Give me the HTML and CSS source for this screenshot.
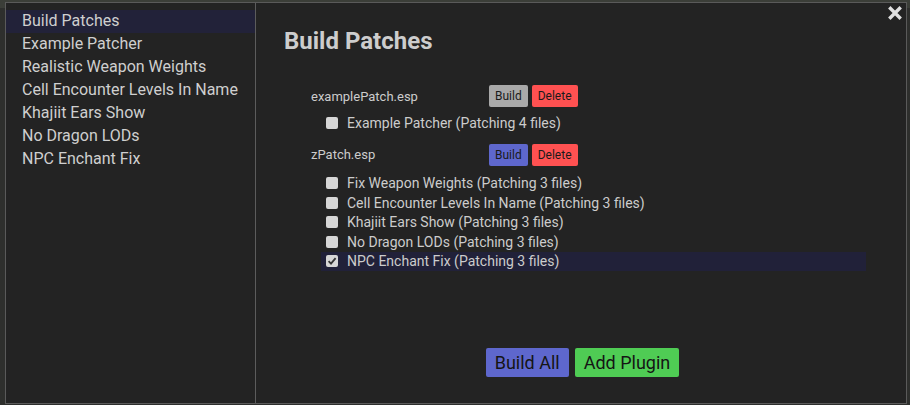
FILE: index.html
```html
<!DOCTYPE html>
<html>
<head>
<meta charset="utf-8">
<link rel="stylesheet" href="styles.css">
</head>
<body>
<div class="backdrop">
  <div class="bg-top"></div>
</div>
<div class="modal">
  <aside class="sidebar">
    <div class="nav-item active">Build Patches</div>
    <div class="nav-item">Example Patcher</div>
    <div class="nav-item">Realistic Weapon Weights</div>
    <div class="nav-item">Cell Encounter Levels In Name</div>
    <div class="nav-item">Khajiit Ears Show</div>
    <div class="nav-item">No Dragon LODs</div>
    <div class="nav-item">NPC Enchant Fix</div>
  </aside>
  <main class="content">
    <h1 class="title">Build Patches</h1>
    <div class="patches">
      <section class="patch">
        <div class="patch-head">
          <span class="patch-name">examplePatch.esp</span>
          <button class="btn btn-grey">Build</button>
          <button class="btn btn-red">Delete</button>
        </div>
        <label class="row"><span class="box"></span><span class="label">Example Patcher (Patching 4 files)</span></label>
      </section>
      <section class="patch patch-second">
        <div class="patch-head">
          <span class="patch-name">zPatch.esp</span>
          <button class="btn btn-blue">Build</button>
          <button class="btn btn-red">Delete</button>
        </div>
        <label class="row"><span class="box"></span><span class="label">Fix Weapon Weights (Patching 3 files)</span></label>
        <label class="row"><span class="box"></span><span class="label">Cell Encounter Levels In Name (Patching 3 files)</span></label>
        <label class="row"><span class="box"></span><span class="label">Khajiit Ears Show (Patching 3 files)</span></label>
        <label class="row"><span class="box"></span><span class="label">No Dragon LODs (Patching 3 files)</span></label>
        <label class="row selected"><span class="box"><svg viewBox="0 0 12 12" width="12" height="12"><path d="M2.6 6.2 L5 8.6 L9.6 3.2" fill="none" stroke="#333" stroke-width="1.8"/></svg></span><span class="label">NPC Enchant Fix (Patching 3 files)</span></label>
      </section>
    </div>
    <div class="footer">
      <button class="btn-lg btn-blue">Build All</button>
      <button class="btn-lg btn-green">Add Plugin</button>
    </div>
  </main>
  <button class="close" aria-label="Close"><svg viewBox="0 0 14 14" width="14" height="14"><path d="M2.5 2.5 L11.5 11.5 M11.5 2.5 L2.5 11.5" stroke="#e0e0e0" stroke-width="3.4" stroke-linecap="square"/></svg></button>
</div>
</body>
</html>
```
FILE: styles.css
```css
* { box-sizing: border-box; }
html, body { margin: 0; padding: 0; }
body {
  width: 910px;
  height: 405px;
  overflow: hidden;
  background: #2e2f2d;
  font-family: Roboto, "Liberation Sans", sans-serif;
  position: relative;
}
.backdrop {
  position: absolute;
  inset: 0;
}
.bg-top {
  height: 8px;
  background: #3b3e38;
}
.modal {
  position: absolute;
  left: 5px;
  top: 2px;
  width: 902px;
  height: 402px;
  background: #232323;
  border: 1px solid #5a5a5a;
  display: flex;
}
.sidebar {
  width: 250px;
  border-right: 1px solid #5c5c5c;
  padding-top: 7px;
  flex-shrink: 0;
}
.nav-item {
  height: 23px;
  line-height: 22px;
  padding-left: 16px;
  font-size: 16px;
  color: #cfcfcf;
}
.nav-item.active { background: #222239; }
.content {
  flex: 1;
  display: flex;
  flex-direction: column;
  padding: 24px 40px 26px 28px;
}
.title {
  margin: 0;
  font-size: 24px;
  font-weight: 700;
  color: #cdcdcd;
  line-height: 28px;
}
.patches {
  margin-top: 30px;
  padding-left: 27px;
}
.patch { margin-bottom: 11px; }
.patch-head {
  display: flex;
  align-items: center;
  height: 22px;
  margin-bottom: 6px;
}
.patch-second .patch-head { margin-bottom: 8px; }
.patch-name {
  width: 178px;
  font-size: 13px;
  color: #cccccc;
}
.btn {
  border: none;
  border-radius: 2px;
  height: 22px;
  padding: 0 6px;
  margin-right: 4px;
  font-family: Roboto, "Liberation Sans", sans-serif;
  font-size: 12px;
  color: #1a1a1a;
}
.btn-grey { background: #a9a9a9; }
.btn-red { background: #ff5151; }
.btn-blue { background: #5e67cd; }
.btn-green { background: #4fcc54; }
.row {
  display: flex;
  align-items: center;
  height: 19.5px;
  margin-left: 10px;
  padding-left: 5px;
  font-size: 14px;
  color: #cccccc;
  white-space: nowrap;
}
.row.selected { background: #212139; }
.box {
  width: 12px;
  height: 12px;
  border-radius: 2px;
  background: #d6d6d6;
  margin-right: 9px;
  display: flex;
  flex-shrink: 0;
}
.footer {
  margin-top: auto;
  display: flex;
  justify-content: center;
  gap: 6px;
  margin-left: -28px;
  margin-right: -40px;
  padding-left: 3px;
}
.btn-lg {
  border: none;
  border-radius: 2px;
  height: 29px;
  padding: 0 9px;
  font-family: Roboto, "Liberation Sans", sans-serif;
  font-size: 18px;
  color: #151515;
}
.close {
  position: absolute;
  right: 4px;
  top: 3px;
  width: 14px;
  height: 14px;
  padding: 0;
  border: none;
  background: none;
  display: flex;
}
```
